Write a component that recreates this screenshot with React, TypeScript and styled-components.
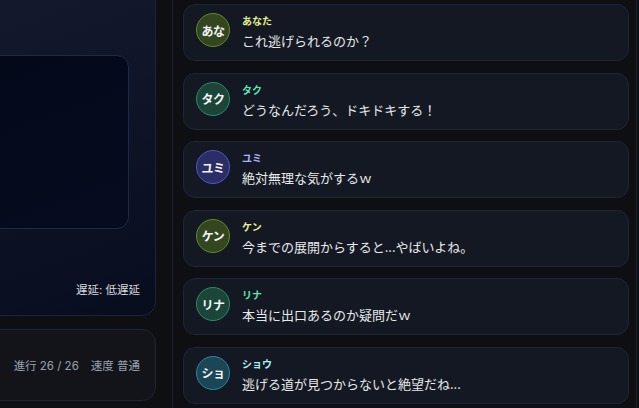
import React from "react";
import styled, { createGlobalStyle } from "styled-components";

const Global = createGlobalStyle`
  html, body { margin: 0; padding: 0; background: #0e0f12; overflow: hidden; }
  body { font-family: "Noto Sans CJK JP", "Noto Sans", sans-serif; color: #e5e7eb; }
  * { box-sizing: border-box; }
`;

const Page = styled.div`
  display: flex;
  width: 639px;
  height: 408px;
  overflow: hidden;
  background: #0e0f12;
`;

const LeftColumn = styled.div`
  flex: 0 0 356px;
  margin-left: -200px;
  margin-top: -24px;
  display: flex;
  flex-direction: column;
  gap: 13px;
`;

const Stage = styled.div`
  height: 340px;
  border-radius: 14px;
  border: 1px solid #1c2436;
  background: linear-gradient(160deg, #151c30 0%, #0f1629 45%, #080d1e 100%);
  padding: 78px 26px 16px 0;
  display: flex;
  flex-direction: column;
  align-items: flex-end;
`;

const Screen = styled.div`
  width: 100%;
  height: 174px;
  border-radius: 12px;
  border: 1px solid #1f2a42;
  background: linear-gradient(160deg, #030718 0%, #050a1c 60%, #060c20 100%);
`;

const Latency = styled.div`
  margin-top: auto;
  margin-right: -11px;
  margin-bottom: 1px;
  font-family: Inter, "Noto Sans CJK JP", sans-serif;
  font-size: 11.5px;
  line-height: 16px;
  color: #d6d9de;
  font-weight: 400;
`;

const ControlBar = styled.div`
  height: 72px;
  border-radius: 14px;
  border: 1px solid #1d2535;
  background: #121419;
  display: flex;
  align-items: center;
  justify-content: flex-end;
  padding-right: 15px;
  gap: 12px;
  font-family: Inter, "Noto Sans CJK JP", sans-serif;
  font-size: 11.5px;
  color: #9aa1ad;
`;

const Gap = styled.div`
  flex: 0 0 16px;
`;

const ChatColumn = styled.div`
  flex: 0 0 465px;
  border-left: 1px solid #1e2330;
  border-right: 1px solid #1e2330;
  padding: 4px 7px 0 10px;
  display: flex;
  flex-direction: column;
  gap: 11.5px;
`;

const Card = styled.div`
  display: flex;
  align-items: flex-start;
  gap: 12px;
  height: 57px;
  padding: 8px 12px 9px;
  border-radius: 12px;
  border: 1px solid #1c2636;
  background: #141822;
`;

const Avatar = styled.div<{ $bg: string; $ring: string }>`
  flex: 0 0 34px;
  width: 34px;
  height: 34px;
  border-radius: 50%;
  background: ${(p) => p.$bg};
  border: 1px solid ${(p) => p.$ring};
  display: flex;
  align-items: center;
  justify-content: center;
  font-size: 12px;
  font-weight: 700;
  color: #f3f4f6;
  letter-spacing: -0.5px;
`;

const Body = styled.div`
  padding-top: 1px;
  display: flex;
  flex-direction: column;
  gap: 3px;
`;

const Name = styled.div<{ $color: string }>`
  font-size: 10px;
  line-height: 14px;
  font-weight: 700;
  color: ${(p) => p.$color};
`;

const Message = styled.div`
  font-size: 13px;
  line-height: 20px;
  color: #e6e8eb;
`;

const messages = [
  { name: "あなた", short: "あな", text: "これ逃げられるのか？", bg: "#33461f", ring: "#5f8c26", color: "#e4ef8e" },
  { name: "タク", short: "タク", text: "どうなんだろう、ドキドキする！", bg: "#1b4538", ring: "#2a8d68", color: "#5fe3b4" },
  { name: "ユミ", short: "ユミ", text: "絶対無理な気がするｗ", bg: "#2b2d66", ring: "#5358c0", color: "#a6b3fa" },
  { name: "ケン", short: "ケン", text: "今までの展開からすると...やばいよね。", bg: "#33461f", ring: "#5f8c26", color: "#e4ef8e" },
  { name: "リナ", short: "リナ", text: "本当に出口あるのか疑問だｗ", bg: "#1b4538", ring: "#2a8d68", color: "#5fe3b4" },
  { name: "ショウ", short: "ショ", text: "逃げる道が見つからないと絶望だね...", bg: "#1b4656", ring: "#2b87a2", color: "#a8eef8" },
];

export default function App() {
  return (
    <>
      <Global />
      <Page>
        <LeftColumn>
          <Stage>
            <Screen />
            <Latency>遅延: 低遅延</Latency>
          </Stage>
          <ControlBar>
            <span>進行 26 / 26</span>
            <span>速度 普通</span>
          </ControlBar>
        </LeftColumn>
        <Gap />
        <ChatColumn>
          {messages.map((m) => (
            <Card key={m.name}>
              <Avatar $bg={m.bg} $ring={m.ring}>{m.short}</Avatar>
              <Body>
                <Name $color={m.color}>{m.name}</Name>
                <Message>{m.text}</Message>
              </Body>
            </Card>
          ))}
        </ChatColumn>
      </Page>
    </>
  );
}
